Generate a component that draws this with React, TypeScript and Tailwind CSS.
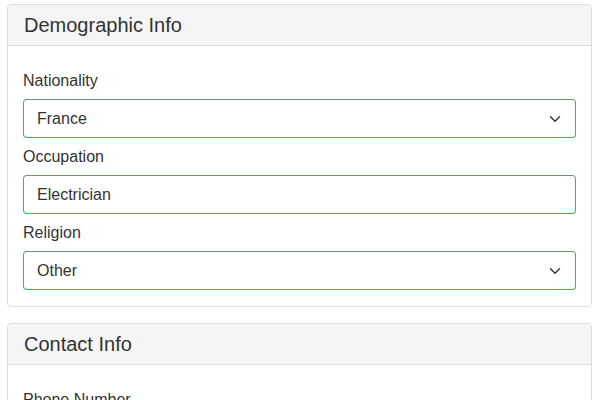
import React from "react";

const Chevron = () => (
  <svg className="absolute right-[12px] top-1/2 -translate-y-1/2" width="16" height="12" viewBox="0 0 16 16" fill="none">
    <path d="M2 5l6 6 6-6" stroke="#343a40" strokeWidth="2" strokeLinecap="round" strokeLinejoin="round" />
  </svg>
);

const fieldCls =
  "relative h-[39px] rounded-[4px] border border-[#28c24f] border-t-[#6a9273] bg-white flex items-center pl-[13px] text-[16px] text-[#333]";

function Field({ label, value, select }: { label: string; value: string; select?: boolean }) {
  return (
    <div className="mb-[7px]">
      <div className="h-[24px] leading-[24px] text-[16px] text-[#333] mb-[6px]">{label}</div>
      <div className={fieldCls}>
        <span>{value}</span>
        {select && <Chevron />}
      </div>
    </div>
  );
}

export default function App() {
  return (
    <div className="bg-white w-[600px] h-[400px] overflow-hidden pt-[4px] px-[7px] font-['Liberation_Sans',Arial,sans-serif]">
      <div className="w-[585px] rounded-[4px] border border-[#dddddd] mb-[16px]">
        <div className="h-[41px] bg-[#f5f5f5] border-b border-[#dddddd] rounded-t-[4px] flex items-center px-[16px] text-[20px] text-[#333]">
          Demographic Info
        </div>
        <div className="px-[15px] pt-[23px] pb-[9px]">
          <Field label="Nationality" value="France" select />
          <Field label="Occupation" value="Electrician" />
          <Field label="Religion" value="Other" select />
        </div>
      </div>
      <div className="w-[585px] rounded-[4px] border border-[#dddddd]">
        <div className="h-[41px] bg-[#f5f5f5] border-b border-[#dddddd] rounded-t-[4px] flex items-center px-[16px] text-[20px] text-[#333]">
          Contact Info
        </div>
        <div className="px-[15px] pt-[23px] pb-[9px]">
          <Field label="Phone Number" value="" />
        </div>
      </div>
    </div>
  );
}
